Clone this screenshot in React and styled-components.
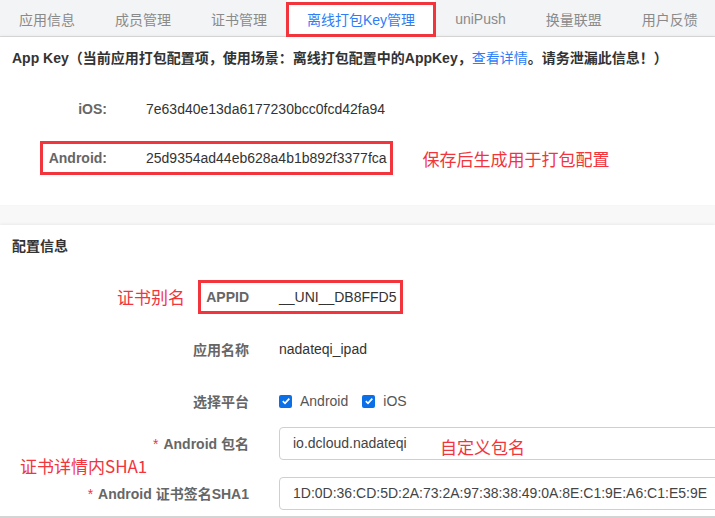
import React from "react";
import styled, { createGlobalStyle } from "styled-components";

const Global = createGlobalStyle`
    html, body {
        margin: 0;
        padding: 0;
        background: #f8f8f9;
        overflow: hidden;
        font-family: "Liberation Sans", "Noto Sans CJK SC", sans-serif;
    }
`;

const Page = styled.div`
    width: 715px;
    height: 518px;
    overflow: hidden;
    display: flex;
    flex-direction: column;
`;

const TabBar = styled.div`
    height: 37px;
    display: flex;
    background: #f3f4f6;
    border-bottom: 1px solid #dcdcdc;
    box-sizing: border-box;
`;

const Tab = styled.div`
    position: relative;
    height: 37px;
    padding: 0 20px;
    display: flex;
    align-items: center;
    font-size: 14px;
    white-space: nowrap;
    color: ${props => props.$active ? "#2f7df6" : "#8a8a8a"};
    background: ${props => props.$active ? "#fff" : "transparent"};
    margin-left: ${props => props.$first ? "-1px" : "0"};

    /* 红色标注框 */
    &::after {
        content: "";
        display: ${props => props.$active ? "block" : "none"};
        position: absolute;
        left: -1px;
        right: -1px;
        top: 2px;
        bottom: 0;
        border: 3px solid #f2343c;
    }
`;

const Section = styled.section`
    background: #fff;
    padding: 0 0 ${props => props.$pad || 0}px;
    margin-top: ${props => props.$top || 0}px;
    box-shadow: 0 -1px 3px rgba(0, 0, 0, 0.06);
    border-bottom: ${props => props.$line ? "2px solid #d4d4d4" : "none"};
    flex: ${props => props.$grow ? 1 : "none"};
`;

const Title = styled.div`
    height: 40px;
    display: flex;
    align-items: center;
    padding-left: 12px;
    font-size: 14px;
    font-weight: bold;
    color: #333;
    white-space: nowrap;

    & a {
        color: #2f7df6;
        font-weight: normal;
        text-decoration: none;
    }
`;

const Row = styled.div`
    position: relative;
    height: 34px;
    margin-top: ${props => props.$gap}px;
    display: flex;
    align-items: center;
`;

const Label = styled.div`
    width: ${props => props.$w}px;
    flex: none;
    text-align: right;
    font-size: 14px;
    font-weight: bold;
    color: #666;
    white-space: nowrap;

    & em {
        font-style: normal;
        font-weight: normal;
        color: #f2343c;
        margin-right: 5px;
    }
`;

const Value = styled.div`
    margin-left: ${props => props.$gap}px;
    font-size: 14px;
    color: #333;
    white-space: nowrap;
`;

const Mark = styled.div`
    position: absolute;
    left: ${props => props.$l}px;
    width: ${props => props.$w}px;
    top: 0;
    bottom: 0;
    border: 3px solid #f2343c;
    box-sizing: border-box;
    pointer-events: none;
`;

const Note = styled.span`
    position: ${props => props.$free ? "absolute" : "static"};
    left: ${props => props.$l}px;
    top: ${props => props.$t}px;
    margin-left: ${props => props.$ml || 0}px;
    font-family: "Noto Sans CJK SC", "Liberation Sans", sans-serif;
    font-size: 17px;
    color: #f2343c;
    white-space: nowrap;
`;

const Checks = styled.div`
    margin-left: 30px;
    display: flex;
    align-items: center;
    gap: 14px;
`;

const Check = styled.label`
    display: flex;
    align-items: center;
    gap: 8px;
    font-size: 14px;
    color: #555;
`;

const Box = styled.span`
    width: 13px;
    height: 13px;
    border-radius: 2px;
    background: #0b6fe8;
    display: flex;
    align-items: center;
    justify-content: center;
`;

const Input = styled.div`
    margin-left: 30px;
    width: 470px;
    height: 33px;
    flex: none;
    border: 1px solid #cfcfcf;
    border-radius: 4px;
    box-sizing: border-box;
    padding-left: 13px;
    display: flex;
    align-items: center;
    font-size: 14px;
    color: #444;
    white-space: nowrap;
    position: relative;
`;

function Tick() {
    return (
        <Box>
            <svg width="10" height="10" viewBox="0 0 10 10">
                <path d="M1.8 5.2 L4 7.3 L8.3 2.6" fill="none" stroke="#fff" strokeWidth="1.7" />
            </svg>
        </Box>
    );
}

const tabs = ["应用信息", "成员管理", "证书管理", "离线打包Key管理", "uniPush", "换量联盟", "用户反馈"];

export default function App() {
    return (
        <Page>
            <Global />
            <TabBar>
                {tabs.map((t, i) => (
                    <Tab key={t} $first={i === 0} $active={i === 3}>{t}</Tab>
                ))}
            </TabBar>

            <Section $pad={30}>
                <Title>
                    App Key（当前应用打包配置项，使用场景：离线打包配置中的AppKey，<a href="#">查看详情</a>。请务泄漏此信息！）
                </Title>
                <Row $gap={15}>
                    <Label $w={107}>iOS:</Label>
                    <Value $gap={39}>7e63d40e13da6177230bcc0fcd42fa94</Value>
                </Row>
                <Row $gap={15}>
                    <Mark $l={40} $w={353} />
                    <Label $w={107}>Android:</Label>
                    <Value $gap={39}>25d9354ad44eb628a4b1b892f3377fca</Value>
                    <Note $ml={36}>保存后生成用于打包配置</Note>
                </Row>
            </Section>

            <Section $top={20} $grow $line>
                <Title>配置信息</Title>
                <Row $gap={15}>
                    <Note $free $l={117} $t={4}>证书别名</Note>
                    <Mark $l={198} $w={205} />
                    <Label $w={249}>APPID</Label>
                    <Value $gap={30}>__UNI__DB8FFD5</Value>
                </Row>
                <Row $gap={18}>
                    <Label $w={249}>应用名称</Label>
                    <Value $gap={30}>nadateqi_ipad</Value>
                </Row>
                <Row $gap={18}>
                    <Label $w={249}>选择平台</Label>
                    <Checks>
                        <Check><Tick />Android</Check>
                        <Check><Tick />iOS</Check>
                    </Checks>
                </Row>
                <Row $gap={8}>
                    <Label $w={249}><em>*</em>Android 包名</Label>
                    <Input>
                        io.dcloud.nadateqi
                        <Note $free $l={160} $t={6}>自定义包名</Note>
                    </Input>
                </Row>
                <Row $gap={16}>
                    <Note $free $l={20} $t={-23}>证书详情内SHA1</Note>
                    <Label $w={249}><em>*</em>Android 证书签名SHA1</Label>
                    <Input>1D:0D:36:CD:5D:2A:73:2A:97:38:38:49:0A:8E:C1:9E:A6:C1:E5:9E</Input>
                </Row>
            </Section>
        </Page>
    );
}
